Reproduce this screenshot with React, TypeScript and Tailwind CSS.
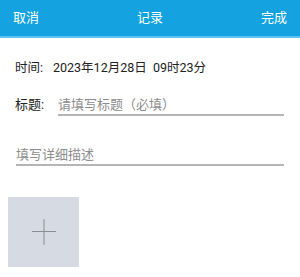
export default function App() {
  return (
    <div className="h-[277px] w-[300px] bg-white font-['Roboto','Noto_Sans_CJK_SC',sans-serif]">
      <header className="flex h-[38px] items-center justify-between border-b-2 border-[#5cc3ee] bg-[#14a3e0] px-[13px] text-[13px] text-white">
        <span>取消</span>
        <span>记录</span>
        <span>完成</span>
      </header>

      <div className="mt-[21px] flex items-center pl-[15px] text-[12.5px] leading-[18px] text-[#222]">
        <span className="w-[38px]">时间:</span>
        <span>2023年12月28日&nbsp;&nbsp;09时23分</span>
      </div>

      <div className="mt-[19px] flex items-end pl-[15px] pr-[16px] text-[13px] leading-[18px]">
        <span className="mb-[2px] w-[43px] text-[#222]">标题:</span>
        <div className="flex-1 border-b-2 border-[#b5b5b5] text-[#8c8c8c]">
          请填写标题（必填）
        </div>
      </div>

      <div className="mx-[16px] mt-[30px] border-b-2 border-[#b5b5b5] text-[13px] leading-[18px] text-[#8c8c8c]">
        填写详细描述
      </div>

      <div className="ml-[8px] mt-[31px] flex h-[70px] w-[71px] items-center justify-center bg-[#d5dae3]">
        <svg width="26" height="28" viewBox="0 0 26 28" fill="none">
          <path d="M13 1v26M1 13.5h24" stroke="#8a8d94" strokeWidth="1" />
        </svg>
      </div>
    </div>
  )
}
